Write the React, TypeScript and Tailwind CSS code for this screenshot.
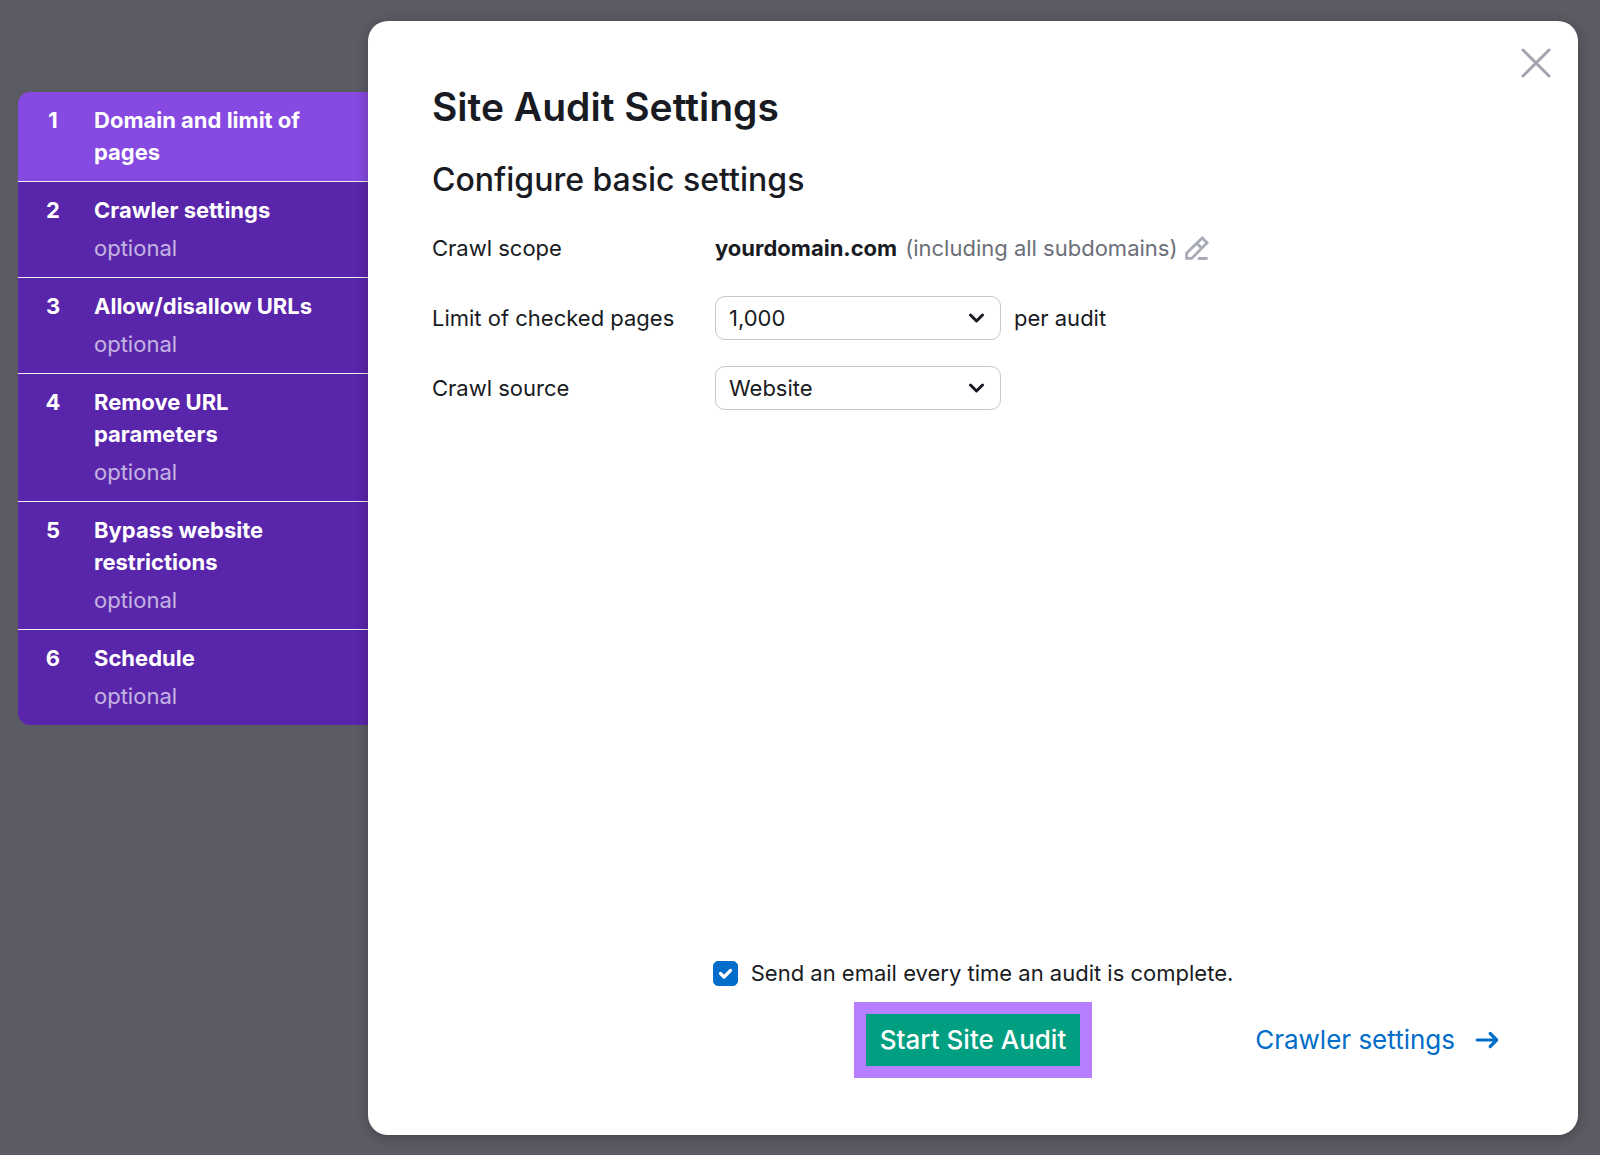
import { useState } from 'react'

const steps = [
  { title: 'Domain and limit of pages', optional: false },
  { title: 'Crawler settings', optional: true },
  { title: 'Allow/disallow URLs', optional: true },
  { title: 'Remove URL parameters', optional: true },
  { title: 'Bypass website restrictions', optional: true },
  { title: 'Schedule', optional: true },
]

function Chevron() {
  return (
    <svg
      aria-hidden="true"
      viewBox="0 0 16 10"
      className="pointer-events-none absolute top-1/2 right-4 h-[10px] w-4 -translate-y-1/2"
      fill="none"
      stroke="currentColor"
      strokeWidth="3"
      strokeLinecap="round"
      strokeLinejoin="round"
    >
      <path d="M1.500 2 7.500 8l6-6" />
    </svg>
  )
}

function SelectField({ id, options }: { id: string; options: string[] }) {
  return (
    <div className="relative w-[286px]">
      <select
        id={id}
        className="h-11 w-full appearance-none rounded-[10px] border border-[#c4c7cf] bg-white pr-10 pl-[13px]"
      >
        {options.map((option) => (
          <option key={option}>{option}</option>
        ))}
      </select>
      <Chevron />
    </div>
  )
}

export default function App() {
  const [active, setActive] = useState(0)
  const [notify, setNotify] = useState(true)

  return (
    <div className="flex min-h-screen items-stretch bg-[#5b5b63] pt-[21px] pr-[22px] pb-5 pl-[18px] font-[Inter,sans-serif] text-[22px] leading-8 text-[#191b23]">
      <nav aria-label="Steps" className="mt-[71px] w-[350px] shrink-0 self-start">
        <ol className="overflow-hidden rounded-l-xl text-white">
          {steps.map((step, i) => (
            <li key={step.title} className="border-b border-white/90 last:border-b-0">
              <button
                type="button"
                onClick={() => setActive(i)}
                className={`flex w-full items-start gap-[33px] pt-3 pr-8 pb-[13px] pl-[27px] text-left ${
                  i === active ? 'bg-[#8649e1]' : 'bg-[#5925ab]'
                }`}
              >
                <span className="w-4 shrink-0 text-center font-bold">{i + 1}</span>
                <span className="block">
                  <span className="block font-bold">{step.title}</span>
                  {step.optional && (
                    <span className="mt-1.5 block text-white/65">optional</span>
                  )}
                </span>
              </button>
            </li>
          ))}
        </ol>
      </nav>

      <main className="relative flex flex-1 flex-col rounded-[20px] bg-white px-16 pt-[62px] pb-[57px] shadow-[0_2px_12px_rgba(25,27,35,0.35)]">
        <button
          type="button"
          aria-label="Close"
          className="absolute top-[26px] right-[26px] text-[#a2a4b1]"
        >
          <svg viewBox="0 0 32 32" className="h-8 w-8" fill="none" stroke="currentColor" strokeWidth="3" strokeLinecap="round">
            <path d="M3 3l26 26M29 3L3 29" />
          </svg>
        </button>

        <h1 className="text-[39px] leading-12 font-semibold">Site Audit Settings</h1>
        <h2 className="mt-[29px] text-[32px] leading-10 font-medium">
          Configure basic settings
        </h2>

        <div className="mt-[26px] grid grid-cols-[283px_1fr] gap-y-[26px]">
          <div className="flex h-11 items-center">Crawl scope</div>
          <div className="flex h-11 items-center">
            <span className="font-bold">yourdomain.com</span>
            <span className="ml-2 text-[#6c6e79]">(including all subdomains)</span>
            <button type="button" aria-label="Edit crawl scope" className="ml-2 text-[#a9abb6]">
              <svg viewBox="0 0 24 24" className="h-6 w-6" fill="none" stroke="currentColor" strokeWidth="2.8">
                <path d="M1.600 22.400v-5.200L17.200 1.900l4.900 4.900L6.700 22.400zM11.700 7.300l5 5" />
                <path d="M14 22.500h7.500" strokeLinecap="round" />
              </svg>
            </button>
          </div>

          <label htmlFor="limit" className="flex h-11 items-center">
            Limit of checked pages
          </label>
          <div className="flex items-center gap-[13px]">
            <SelectField id="limit" options={['1,000', '500', '100']} />
            <span>per audit</span>
          </div>

          <label htmlFor="source" className="flex h-11 items-center">
            Crawl source
          </label>
          <SelectField id="source" options={['Website', 'Sitemap']} />
        </div>

        <div className="mt-auto flex flex-col">
          <label className="flex items-center gap-[13px] self-center">
            <span className="relative flex">
              <input
                type="checkbox"
                checked={notify}
                onChange={(e) => setNotify(e.target.checked)}
                className="peer h-[25px] w-[25px] appearance-none rounded-[5px] border border-[#c4c7cf] checked:border-[#006dca] checked:bg-[#006dca]"
              />
              <svg
                aria-hidden="true"
                viewBox="0 0 25 25"
                className="pointer-events-none absolute inset-0 hidden text-white peer-checked:block"
                fill="none"
                stroke="currentColor"
                strokeWidth="3.2"
                strokeLinecap="round"
                strokeLinejoin="round"
              >
                <path d="M7.500 12.500l3.500 3.500 6.500-6.500" />
              </svg>
            </span>
            <span>Send an email every time an audit is complete.</span>
          </label>

          <div className="mt-[13px] grid grid-cols-[1fr_auto_1fr] items-center text-[26px]">
            <button
              type="button"
              className="col-start-2 border-12 border-[#b77fff] bg-[#009f81] px-[14px] py-[10px] font-medium text-white"
            >
              Start Site Audit
            </button>
            <a href="#crawler" className="mr-[15px] flex items-center gap-5 justify-self-end text-[#006dca]">
              Crawler settings
              <svg aria-hidden="true" viewBox="0 0 24 18" className="h-[18px] w-6" fill="none" stroke="currentColor" strokeWidth="3.2" strokeLinecap="round" strokeLinejoin="round">
                <path d="M2.200 9h19.500M15.200 2.500L21.700 9l-6.500 6.500" />
              </svg>
            </a>
          </div>
        </div>
      </main>
    </div>
  )
}
